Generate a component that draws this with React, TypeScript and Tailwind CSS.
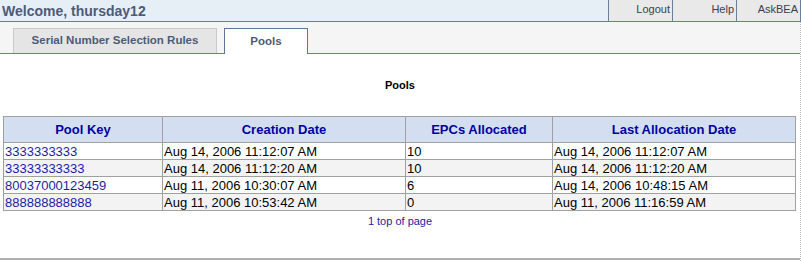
const rows = [
  { key: '3333333333', created: 'Aug 14, 2006 11:12:07 AM', epcs: '10', last: 'Aug 14, 2006 11:12:07 AM' },
  { key: '33333333333', created: 'Aug 14, 2006 11:12:20 AM', epcs: '10', last: 'Aug 14, 2006 11:12:20 AM' },
  { key: '80037000123459', created: 'Aug 11, 2006 10:30:07 AM', epcs: '6', last: 'Aug 14, 2006 10:48:15 AM' },
  { key: '888888888888', created: 'Aug 11, 2006 10:53:42 AM', epcs: '0', last: 'Aug 11, 2006 11:16:59 AM' },
];

const HeaderButton = ({ label }: { label: string }) => (
  <div className="w-16 h-full flex items-start justify-end pt-[3px] pr-[2px] bg-[#e9e9e9] border-l border-[#6b7f9c] text-[11px] text-[#3a3f4a] leading-[13px]">
    {label}
  </div>
);

export default function App() {
  return (
    <div className="w-[801px] h-[261px] bg-white overflow-hidden font-['Liberation_Sans',Arial,sans-serif]">
      {/* Top bar */}
      <div className="flex h-[22px] bg-[#e6eef6] border-b border-[#6b7f9c]">
        <div className="flex-1 pl-[2px] pt-[3px] text-[14px] font-bold text-[#4c5b78] leading-[16px]">
          Welcome, thursday12
        </div>
        <HeaderButton label="Logout" />
        <HeaderButton label="Help" />
        <div className="w-[65px] h-full flex items-start justify-end pt-[3px] pr-[2px] bg-[#e9e9e9] border-x border-[#6b7f9c] text-[11px] text-[#3a3f4a] leading-[13px]">
          AskBEA
        </div>
      </div>

      <div className="border-r border-dotted border-[#b8b8b8] h-[239px]">
        {/* Tabs */}
        <div className="flex items-end gap-[7px] h-[32px] pl-[13px] bg-[#f5f5f5] border-b border-[#6b7f9c]">
          <div className="w-[204px] h-[25px] flex items-center justify-center bg-[#e5e5e5] border border-b-0 border-[#c9c9c9] text-[11.5px] font-bold text-[#4c5b78]">
            Serial Number Selection Rules
          </div>
          <div className="w-[84px] h-[26px] -mb-px flex items-center justify-center bg-white border border-b-0 border-[#5f7697] text-[11.5px] font-bold text-[#4c5b78]">
            Pools
          </div>
        </div>

        {/* Content */}
        <div className="pt-[25px]">
          <div className="text-center text-[11px] font-bold text-black leading-[13px]">Pools</div>

          <div className="pl-[3px] pr-[4px] pt-[24px]">
            <table className="w-full border-collapse border border-[#a0a0a0] text-[13px] leading-[15px]">
              <thead>
                <tr className="h-[26px] bg-[#d3dff0]">
                  <th className="w-[159px] border border-[#a0a0a0] font-bold text-[#0000a0]">Pool Key</th>
                  <th className="w-[243px] border border-[#a0a0a0] font-bold text-[#0000a0]">Creation Date</th>
                  <th className="w-[147px] border border-[#a0a0a0] font-bold text-[#0000a0]">EPCs Allocated</th>
                  <th className="border border-[#a0a0a0] font-bold text-[#0000a0]">Last Allocation Date</th>
                </tr>
              </thead>
              <tbody>
                {rows.map((r, i) => (
                  <tr key={r.key} className={`h-[17px] ${i % 2 === 1 ? 'bg-[#f3f3f3]' : 'bg-white'}`}>
                    <td className="border border-[#a0a0a0] px-[1px] p-0 text-[#1c1ca8]">{r.key}</td>
                    <td className="border border-[#a0a0a0] px-[1px] p-0 text-black">{r.created}</td>
                    <td className="border border-[#a0a0a0] px-[1px] p-0 text-black">{r.epcs}</td>
                    <td className="border border-[#a0a0a0] px-[1px] p-0 text-black">{r.last}</td>
                  </tr>
                ))}
              </tbody>
            </table>
          </div>

          <div className="pt-[4px] text-center text-[11px] leading-[13px] text-[#1c1ca8]">1 top of page</div>

          <div className="mt-[30px] h-[2px] bg-[#b0b0b0]" />
        </div>
      </div>
    </div>
  );
}
